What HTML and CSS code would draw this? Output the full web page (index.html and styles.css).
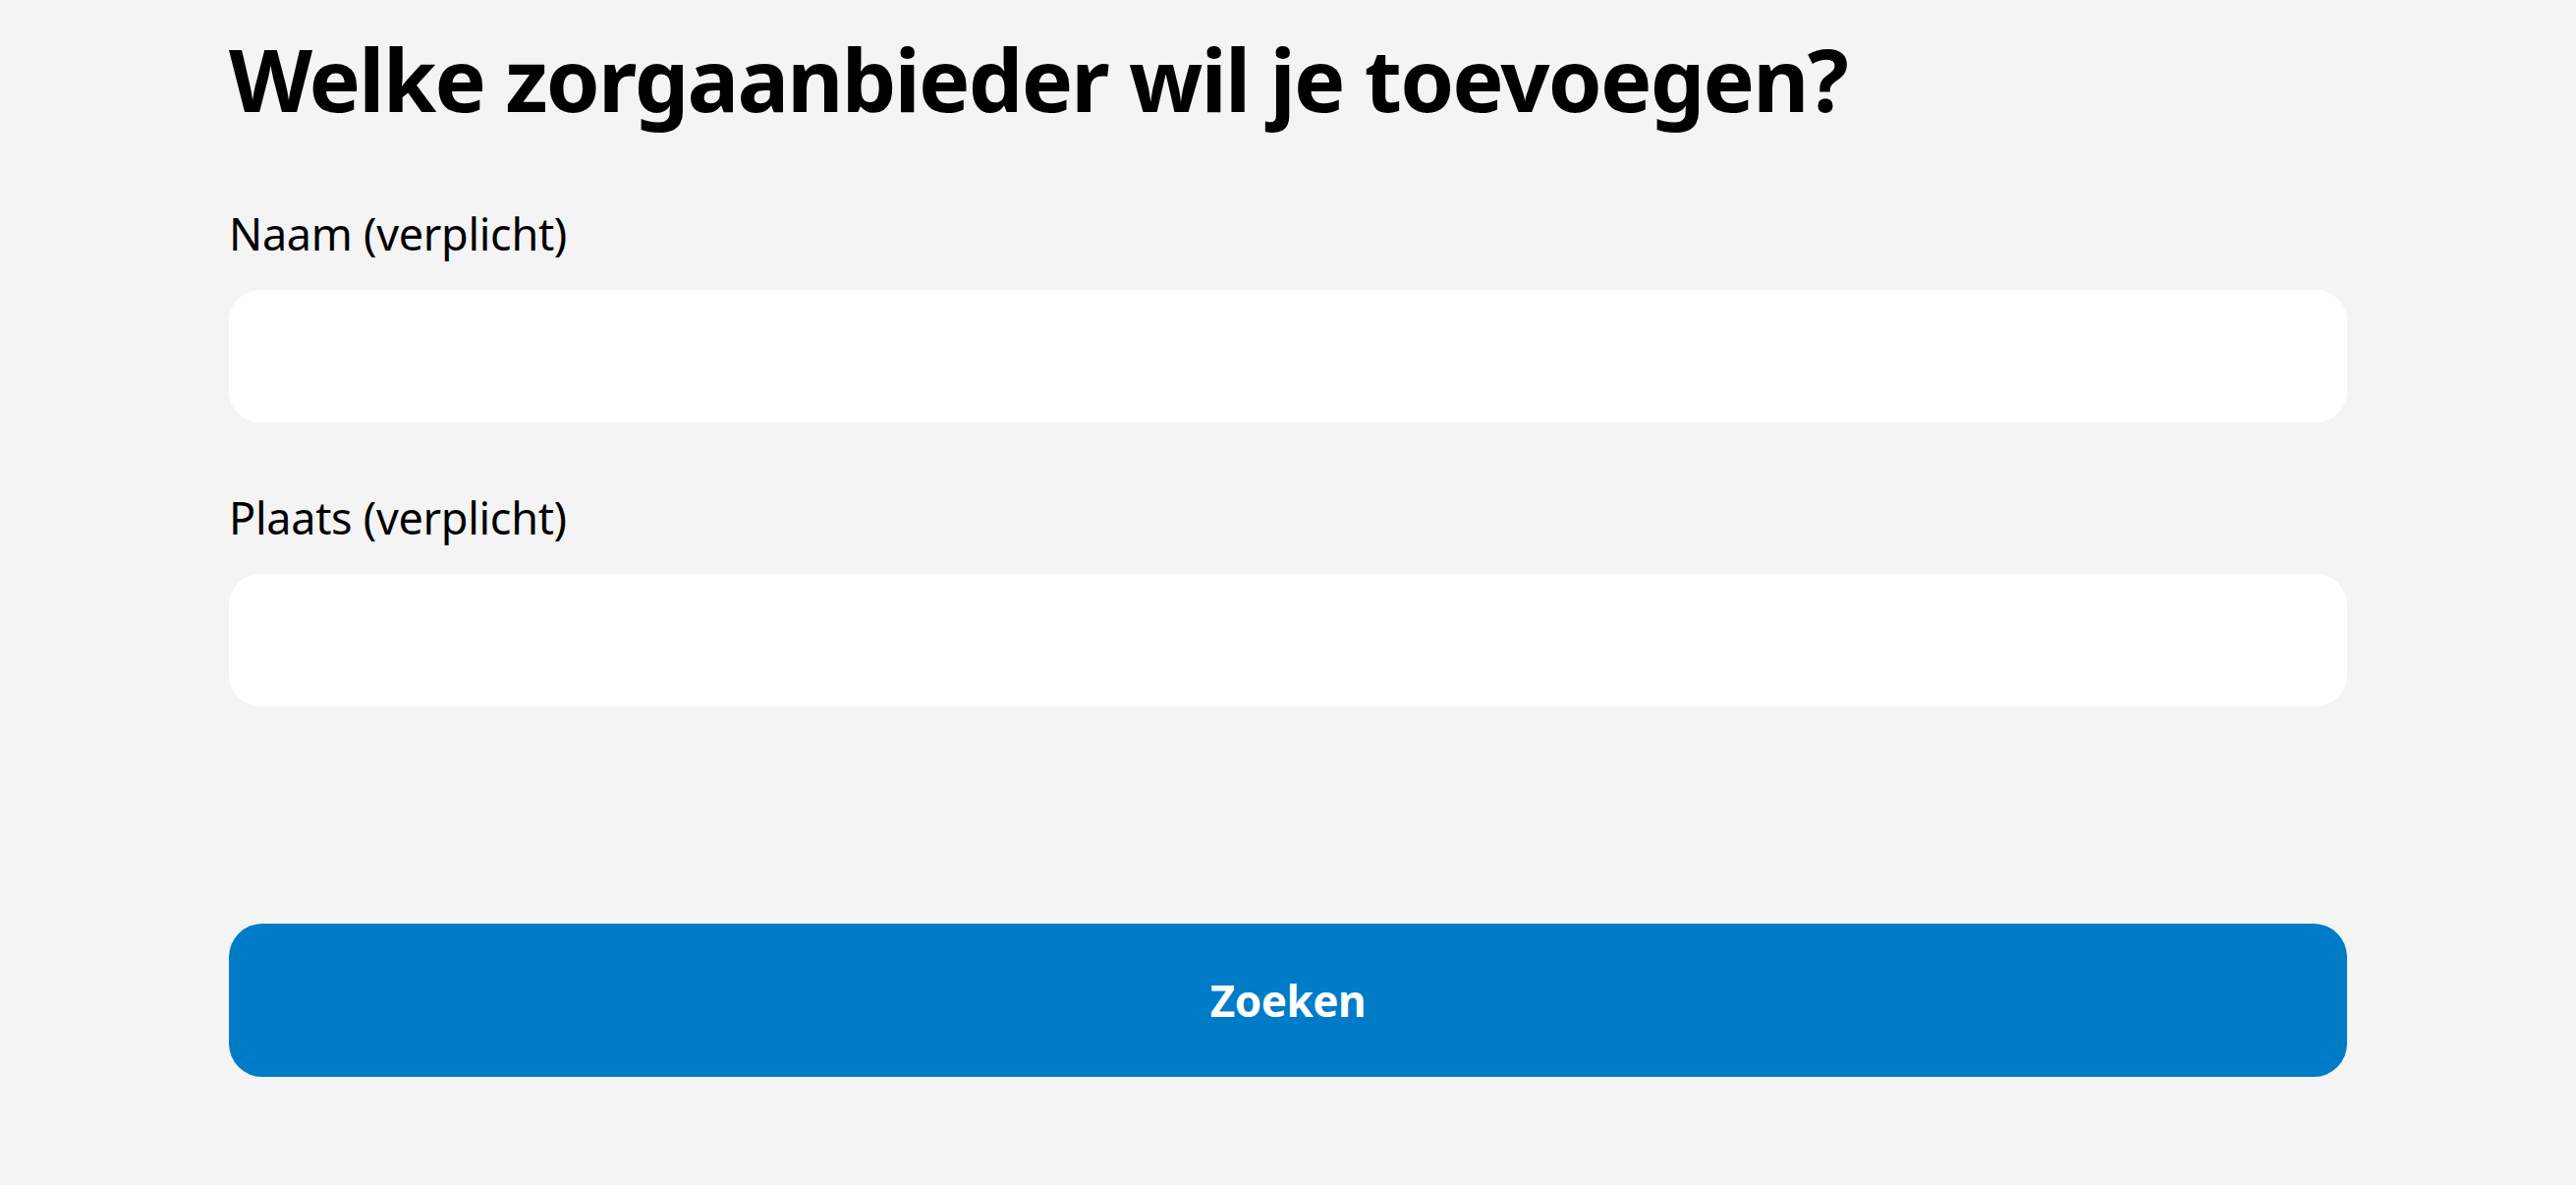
FILE: index.html
```html
<!DOCTYPE html>
<html lang="nl">
<head>
    <meta charset="UTF-8">
    <meta name="viewport" content="width=device-width, initial-scale=1.0">
    <title>Zorgaanbieder toevoegen</title>
    <link rel="stylesheet" href="styles.css">
</head>
<body>
    <main class="page">
        <h1 class="page-title">Welke zorgaanbieder wil je toevoegen?</h1>

        <!-- Zoekformulier -->
        <form class="search-form" onsubmit="return false;">
            <div class="field">
                <label class="field-label" for="naam">Naam (verplicht)</label>
                <input class="field-input" type="text" id="naam" name="naam" required>
            </div>
            <div class="field">
                <label class="field-label" for="plaats">Plaats (verplicht)</label>
                <input class="field-input" type="text" id="plaats" name="plaats" required>
            </div>
            <button class="btn-primary" type="submit">Zoeken</button>
        </form>
    </main>
</body>
</html>
```

FILE: styles.css
```css
body {
    margin: 0;
    background-color: #f4f4f4;
    color: #000;
    font-family: "Noto Sans", "Open Sans", sans-serif;
}

.page {
    width: 2156px;
    margin: 0 auto;
    padding-top: 28px;
}

.page-title {
    margin: 0 0 72px;
    font-size: 88px;
    line-height: 1.2;
    font-weight: 700;
    letter-spacing: -1.8px;
}

/* Form fields */
.field {
    margin-bottom: 65px;
}

.field-label {
    display: block;
    margin-bottom: 25px;
    font-size: 45px;
    line-height: 64px;
    letter-spacing: -0.3px;
}

.field-input {
    display: block;
    width: 100%;
    height: 135px;
    padding: 0 40px;
    border: none;
    border-radius: 32px;
    background-color: #fff;
    font-family: inherit;
    font-size: 45px;
    box-sizing: border-box;
    outline: none;
}

.btn-primary {
    display: block;
    width: 100%;
    height: 156px;
    margin-top: 221px;
    border: none;
    border-radius: 34px;
    background-color: #007bc7;
    color: #fff;
    font-family: inherit;
    font-size: 44px;
    font-weight: 700;
    letter-spacing: -0.5px;
    cursor: pointer;
}
```
